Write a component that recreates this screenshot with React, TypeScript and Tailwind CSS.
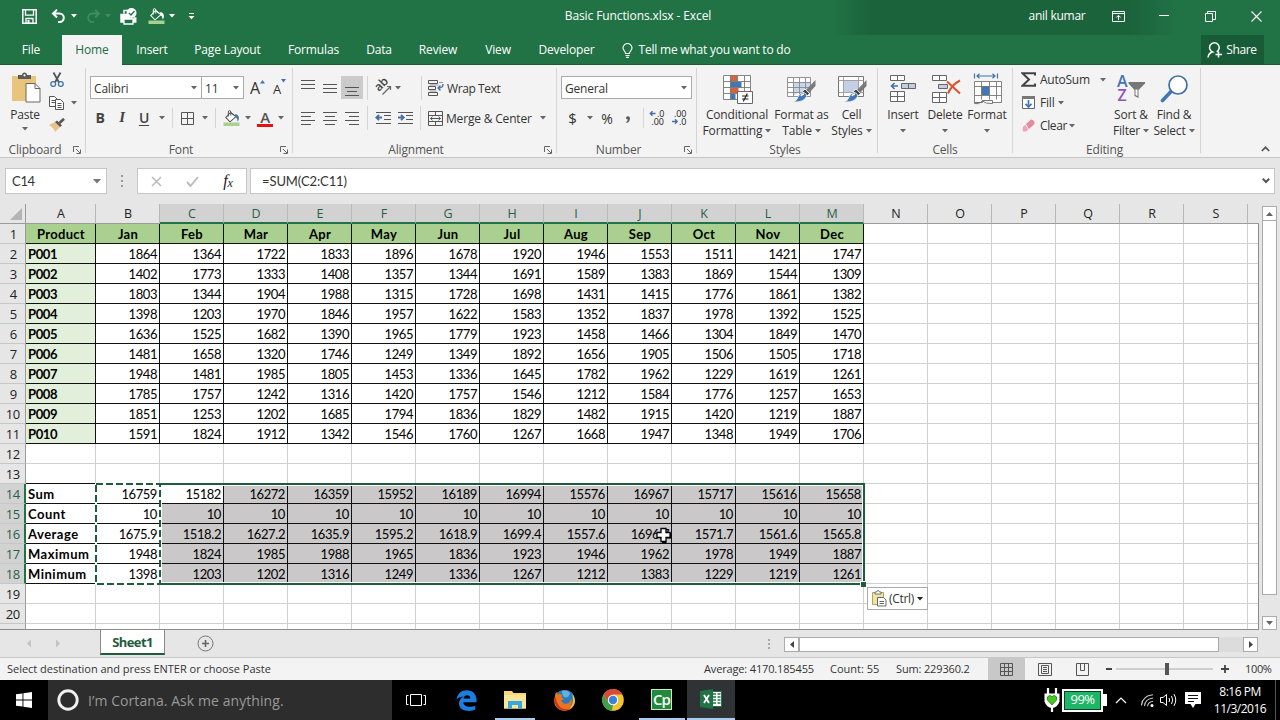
import React from "react";

type CellProps = { className?: string; children?: React.ReactNode };

const COLS = ["A", "B", "C", "D", "E", "F", "G", "H", "I", "J", "K", "L", "M", "N", "O", "P", "Q", "R", "S"];

const DATA: Record<number, string[]> = {
  1: ["Product", "Jan", "Feb", "Mar", "Apr", "May", "Jun", "Jul", "Aug", "Sep", "Oct", "Nov", "Dec"],
  2: ["P001", "1864", "1364", "1722", "1833", "1896", "1678", "1920", "1946", "1553", "1511", "1421", "1747"],
  3: ["P002", "1402", "1773", "1333", "1408", "1357", "1344", "1691", "1589", "1383", "1869", "1544", "1309"],
  4: ["P003", "1803", "1344", "1904", "1988", "1315", "1728", "1698", "1431", "1415", "1776", "1861", "1382"],
  5: ["P004", "1398", "1203", "1970", "1846", "1957", "1622", "1583", "1352", "1837", "1978", "1392", "1525"],
  6: ["P005", "1636", "1525", "1682", "1390", "1965", "1779", "1923", "1458", "1466", "1304", "1849", "1470"],
  7: ["P006", "1481", "1658", "1320", "1746", "1249", "1349", "1892", "1656", "1905", "1506", "1505", "1718"],
  8: ["P007", "1948", "1481", "1985", "1805", "1453", "1336", "1645", "1782", "1962", "1229", "1619", "1261"],
  9: ["P008", "1785", "1757", "1242", "1316", "1420", "1757", "1546", "1212", "1584", "1776", "1257", "1653"],
  10: ["P009", "1851", "1253", "1202", "1685", "1794", "1836", "1829", "1482", "1915", "1420", "1219", "1887"],
  11: ["P010", "1591", "1824", "1912", "1342", "1546", "1760", "1267", "1668", "1947", "1348", "1949", "1706"],
  14: ["Sum", "16759", "15182", "16272", "16359", "15952", "16189", "16994", "15576", "16967", "15717", "15616", "15658"],
  15: ["Count", "10", "10", "10", "10", "10", "10", "10", "10", "10", "10", "10", "10"],
  16: ["Average", "1675.9", "1518.2", "1627.2", "1635.9", "1595.2", "1618.9", "1699.4", "1557.6", "1696.7", "1571.7", "1561.6", "1565.8"],
  17: ["Maximum", "1948", "1824", "1985", "1988", "1965", "1836", "1923", "1946", "1962", "1978", "1949", "1887"],
  18: ["Minimum", "1398", "1203", "1202", "1316", "1249", "1336", "1267", "1212", "1383", "1229", "1219", "1261"],
};

function Box({ className = "", children }: CellProps) {
  return <div className={`flex shrink-0 items-center justify-center ${className}`}>{children}</div>;
}

function Arrow({ className = "text-[#666]" }: { className?: string }) {
  return (
    <svg width="6" height="4" viewBox="0 0 6 4" className={`shrink-0 ${className}`}>
      <path d="M0 0h6L3 3.500z" fill="currentColor" />
    </svg>
  );
}

function Sep({ className = "" }: { className?: string }) {
  return <div className={`w-px shrink-0 bg-[#d4d4d4] ${className}`} />;
}

function Launcher() {
  return (
    <svg width="8" height="8" viewBox="0 0 8 8" className="mt-px shrink-0">
      <path d="M.5 6V.5H6M3 3l4 4M7.500 3.500v4h-4" fill="none" stroke="#666" />
    </svg>
  );
}

function Group({ name, className, launcher, pad = "", children }: { name: string; className: string; launcher?: boolean; pad?: string; children: React.ReactNode }) {
  return (
    <div className={`flex shrink-0 ${className}`}>
      <div className="flex min-w-0 flex-1 flex-col">
        <div className="flex h-[76px] flex-col">{children}</div>
        <div className="flex h-4 items-center pr-1">
          <span className={`flex-1 pt-px text-center text-[#555] ${pad}`}>{name}</span>
          {launcher && <Launcher />}
        </div>
      </div>
      <Sep className="mt-[3px] h-[85px]" />
    </div>
  );
}

function Bucket({ light }: { light?: boolean }) {
  const line = light ? "#fff" : "#555";
  return (
    <svg width="17" height="16" viewBox="0 0 17 16">
      <path d="M7.500 2.500L2.800 7.600l4.200 4.200 6-5.200z" fill={light ? "none" : "#fff"} stroke={line} strokeWidth="1.100" />
      <path d="M5.300 6.500V2q0-1.400 1.200-1.400T7.800 2v3.500M7.500 2.500l5.600 4.200" fill="none" stroke={line} strokeWidth="1" />
      <path d="M12.300 4q3.800.8 3.600 4.400-.1 1.800-1.200 3-.2-3.300-2.700-4.600z" fill={light ? "#fff" : "#4675a8"} />
      <path d="M.5 12.500h16V16H.5z" fill="#a9d08e" />
    </svg>
  );
}

function Lines({ rows }: { rows: number[][] }) {
  return (
    <svg width="16" height="16" viewBox="0 0 16 16">
      {rows.map(([x1, x2, y], i) => (
        <path key={i} d={`M${x1} ${y}.5H${x2}`} stroke="#555" />
      ))}
    </svg>
  );
}

function TitleBar() {
  return (
    <div className="flex h-[35px] items-center bg-[linear-gradient(90deg,transparent_0,transparent_830px,#1b643b_870px,#1b633b_1130px,transparent_1180px)] pb-[3px] text-white">
      <Box className="ml-[21px] w-4">
        <svg width="15" height="15" viewBox="0 0 15 15">
          <path d="M.8.8h13.400v13.400H.8z" fill="none" stroke="#fff" strokeWidth="1.500" />
          <path d="M3.500 1v5.200h8V1M4 14v-4.500h7V14" fill="none" stroke="#fff" strokeWidth="1.300" />
          <path d="M5.500 11h2v3h-2z" fill="#fff" />
        </svg>
      </Box>
      <Box className="ml-[13px] w-4">
        <svg width="15" height="14" viewBox="0 0 15 14">
          <path d="M2 4.500h6.500a4.300 4.300 0 0 1 0 8.600H7M6 .8L2 4.500l4 4" fill="none" stroke="#fff" strokeWidth="2" />
        </svg>
      </Box>
      <Box className="ml-[3px] w-2.5"><Arrow className="text-white" /></Box>
      <Box className="ml-[6px] w-4">
        <svg width="15" height="14" viewBox="0 0 15 14">
          <path d="M13 4.500H6.500a4.300 4.300 0 0 0 0 8.600H8M9 .8l4 3.700-4 4" fill="none" stroke="#408b60" strokeWidth="1.800" />
        </svg>
      </Box>
      <Box className="ml-0.5 w-2.5"><Arrow className="text-[#408b60]" /></Box>
      <Box className="ml-[7px] w-[17px]">
        <svg width="17" height="17" viewBox="0 0 17 17">
          <path d="M4 5.500V2.500h4M13.500 10h2.200v4h-2.500M4 14H1V6.500h6" fill="none" stroke="#fff" strokeWidth="1.500" />
          <path d="M1 7h7l3 3.500H16V14H1z" fill="#fff" />
          <path d="M4 11h9v5H4z" fill="#217346" stroke="#fff" strokeWidth="1.300" />
          <circle cx="11.500" cy="5" r="5" fill="#fff" />
          <path d="M9 5l2 2 3.500-4" fill="none" stroke="#217346" strokeWidth="1.300" />
        </svg>
      </Box>
      <Box className="ml-[11px] w-[17px]"><Bucket light /></Box>
      <Box className="ml-[2px] w-2.5"><Arrow className="text-white" /></Box>
      <Box className="ml-[9px] w-2.5">
        <svg width="7" height="8" viewBox="0 0 7 8"><path d="M1 1.500h5" stroke="#fff" /><path d="M.5 4h6l-3 3.300z" fill="#fff" /></svg>
      </Box>
      <div className="ml-[368px] w-[148px] whitespace-nowrap text-center tracking-[-0.1px]">Basic Functions.xlsx - Excel</div>
      <div className="ml-[316px] w-[58px] whitespace-nowrap text-center tracking-[-0.25px]">anil kumar</div>
      <Box className="ml-[24px] w-4">
        <svg width="13" height="11" viewBox="0 0 13 11"><path d="M.5.5h12v10H.5zM.5 2.500h12M6.500 9V4.500M4.300 6.500l2.200-2.200 2.200 2.200" fill="none" stroke="#fff" /></svg>
      </Box>
      <Box className="ml-[30px] w-4"><svg width="10" height="2"><path d="M0 .5h10" stroke="#fff" /></svg></Box>
      <Box className="ml-[30px] w-4">
        <svg width="11" height="11" viewBox="0 0 11 11"><path d="M.5 2.500h7v8h-7zM2.500 2.500v-2h8v8h-3" fill="none" stroke="#fff" /></svg>
      </Box>
      <Box className="ml-[30px] w-4">
        <svg width="11" height="11" viewBox="0 0 11 11"><path d="M.5.5l10 10M10.500.5l-10 10" fill="none" stroke="#fff" strokeWidth="1.100" /></svg>
      </Box>
    </div>
  );
}

function TabBar() {
  return (
    <div className="flex h-[30px] items-end tracking-[-0.15px] text-white shadow-[inset_0_-1px_0_#1a5c38]">
      <Box className="h-[30px] w-[62px]">File</Box>
      <Box className="h-[30px] w-[60px] bg-[#f3f3f3] text-[#1f6b42]">Home</Box>
      <Box className="h-[30px] w-[60px]">Insert</Box>
      <Box className="h-[30px] w-[91px]">Page Layout</Box>
      <Box className="h-[30px] w-[81px]">Formulas</Box>
      <Box className="h-[30px] w-[50px]">Data</Box>
      <Box className="h-[30px] w-[68px]">Review</Box>
      <Box className="h-[30px] w-[52px]">View</Box>
      <Box className="h-[30px] w-[85px]">Developer</Box>
      <Box className="ml-3 h-[30px] w-3">
        <svg width="11" height="15" viewBox="0 0 11 15"><path d="M3.500 10.500Q3.400 8.800 2 7.400A4.300 4.300 0 1 1 9 7.400Q7.600 8.800 7.500 10.500zM3.500 12.500h4M4 14.400h3" fill="none" stroke="#fff" strokeWidth="1.100" /></svg>
      </Box>
      <Box className="ml-1.5 h-[30px] w-[151px] whitespace-nowrap tracking-[-0.22px]">Tell me what you want to do</Box>
      <Box className="ml-auto mr-4 h-[30px] w-[63px] gap-[3px] bg-[#185c37] pr-px">
        <svg width="16" height="17" viewBox="0 0 16 17"><path d="M1 15.500q.5-4.500 4.500-5.500a4.800 4.800 0 1 1 4.200-.2M11.500 9.500v6M8.500 12.500h6.500" fill="none" stroke="#fff" strokeWidth="1.500" /></svg>
        <span className="tracking-[-0.4px]">Share</span>
      </Box>
    </div>
  );
}

function BigButton({ className, icon, lines }: { className: string; icon: React.ReactNode; lines: string[] }) {
  return (
    <div className={`flex shrink-0 flex-col items-center whitespace-nowrap ${className}`}>
      <div className="mt-1.5 flex h-[35px] items-center justify-center">{icon}</div>
      <div className="h-4 leading-[18px]">{lines[0]}</div>
      <div className="flex h-4 items-center gap-[3px] pt-px leading-4">
        {lines[1] && <span>{lines[1]}</span>}
        <Arrow />
      </div>
    </div>
  );
}

function BrushHead() {
  return (
    <>
      <path d="M28.500 6v6l-6.500 7-3-3z" fill="#7a7a7a" />
      <path d="M18 15l4.500 4.500-2.500 2.500-4.500-4.500z" fill="#444" stroke="#fff" strokeWidth=".8" />
      <path d="M6 28q4-1 5-5 1.500-4 5-4.500 4 .5 3.500 4Q17 28.500 6 28z" fill="#3f78b5" stroke="#f3f3f3" strokeWidth=".8" />
      <path d="M14 22q1-2 3-2" stroke="#fff" strokeWidth="1.500" fill="none" />
    </>
  );
}

function Ribbon() {
  return (
    <div className="flex h-[93px] border-b border-[#c6c6c6] bg-[#f3f3f3] tracking-[-0.18px] text-[#333]">
      <Group name="Clipboard" className="w-[86px]" launcher pad="pr-[3px]">
        <div className="flex">
          <div className="ml-[6px] flex w-[38px] flex-col items-center">
            <svg className="ml-[2px] mt-[7px]" width="30" height="32" viewBox="0 0 30 32">
              <path d="M1 4h24v25H1z" fill="#e8c57b" />
              <path d="M7 7V3h4q0-2.500 2.500-2.500T16 3h4v4z" fill="#5a5a5a" />
              <circle cx="13.500" cy="3.300" r="1.100" fill="#fff" />
              <path d="M15 11.500h9l5 5V30H15z" fill="#fff" stroke="#666" />
              <path d="M24 11.500v5h5" fill="none" stroke="#666" />
            </svg>
            <div className="mt-[3px] h-4 leading-4">Paste</div>
            <div className="mt-[4px]"><Arrow /></div>
          </div>
          <div className="ml-[4px] flex flex-col pt-[3px]">
            <Box className="h-[23px] w-[18px]">
              <svg width="14" height="16" viewBox="0 0 14 16">
                <path d="M3.500.5L9 10.500M10.500.5L5 10.500" stroke="#555" strokeWidth="1.800" />
                <circle cx="3.200" cy="12" r="2.400" fill="none" stroke="#4472a8" strokeWidth="1.300" />
                <circle cx="10.800" cy="12" r="2.400" fill="none" stroke="#4472a8" strokeWidth="1.300" />
              </svg>
            </Box>
            <div className="flex h-[23px] items-center">
              <Box className="w-[18px]">
                <svg width="16" height="14" viewBox="0 0 16 14">
                  <path d="M.5.5h5l3 3v7h-8zM2.500 4.500h4M2.500 6.500h4" fill="#fff" stroke="#555" />
                  <path d="M6.500 3.500h5l3 3v7h-8zM8.500 7.500h4M8.500 9.500h4M8.500 11.500h4" fill="#fff" stroke="#555" />
                </svg>
              </Box>
              <Box className="ml-[3px] w-2.5"><Arrow /></Box>
            </div>
            <Box className="h-[22px] w-[18px]">
              <svg width="16" height="14" viewBox="0 0 16 14">
                <path d="M0 7l6-3 5 5-5 5Q5 10 0 7z" fill="#e8c08a" />
                <path d="M6 4l2-1.500 5 5L11 9z" fill="#555" />
                <path d="M10.500 5L15 .8" stroke="#555" strokeWidth="2.600" />
              </svg>
            </Box>
          </div>
        </div>
      </Group>

      <Group name="Font" className="w-[207px]" launcher pad="pr-[4px]">
        <div className="mt-[11px] flex h-[23px] items-center pl-1">
          <div className="flex h-[23px] w-[112px] items-center justify-between border border-[#ababab] bg-white pl-[3px] pr-[4px]">
            <span className="pt-[2px]">Calibri</span><Arrow />
          </div>
          <div className="-ml-px flex h-[23px] w-[43px] items-center justify-between border border-[#ababab] bg-white pl-[3px] pr-[4px]">
            <span className="pt-[2px]">11</span><Arrow />
          </div>
          <div className="ml-[6px] flex w-[14px] items-start text-[16px] leading-4"><span>A</span>
            <svg width="5" height="4" className="shrink-0"><path d="M0 3.500h5L2.500 0z" fill="#4472a8" /></svg>
          </div>
          <div className="ml-[9px] flex w-[14px] items-start text-[13px] leading-4"><span className="pt-0.5">A</span>
            <svg width="5" height="4" className="shrink-0"><path d="M0 0h5L2.500 3.500z" fill="#4472a8" /></svg>
          </div>
        </div>
        <div className="mt-[8px] flex h-[22px] items-center text-sm">
          <Box className="w-7 font-bold text-[#444]">B</Box>
          <Box className="w-4 font-['Liberation_Serif'] text-[15px] font-bold italic text-[#444]">I</Box>
          <Box className="w-7 font-semibold text-[#444] underline underline-offset-2">U</Box>
          <Box className="w-2"><Arrow /></Box>
          <Sep className="ml-1.5 h-5" />
          <Box className="ml-[7px] w-[15px]">
            <svg width="13" height="13" viewBox="0 0 13 13"><path d="M.5.5h12v12H.5zM6.500.5v12M.5 6.500h12" fill="none" stroke="#555" /></svg>
          </Box>
          <Box className="ml-1 w-3"><Arrow /></Box>
          <Sep className="ml-1 h-5" />
          <Box className="ml-[7px] w-[17px]"><Bucket /></Box>
          <Box className="ml-[2px] w-3"><Arrow /></Box>
          <Box className="ml-[3px] w-4">
            <div className="flex flex-col items-center pt-px">
              <span className="h-[12px] text-[15px] font-semibold leading-[12px] text-[#555]">A</span>
              <div className="mt-px h-[3px] w-4 bg-[#e81010]" />
            </div>
          </Box>
          <Box className="ml-[2px] w-3"><Arrow /></Box>
        </div>
      </Group>

      <Group name="Alignment" className="w-[264px]" launcher pad="pr-[5px]">
        <div className="mt-[11px] flex h-[23px] items-center">
          <Box className="ml-[7px] w-4 pb-[3px]"><Lines rows={[[1, 15, 2], [1, 15, 6], [1, 15, 10]]} /></Box>
          <Box className="ml-[6px] w-4"><Lines rows={[[1, 15, 4], [1, 15, 8], [1, 15, 12]]} /></Box>
          <Box className="ml-[3px] h-[23px] w-[22px] bg-[#cbcbcb] pt-[4px]"><Lines rows={[[1, 15, 5], [3, 13, 9], [1, 15, 13]]} /></Box>
          <Sep className="ml-1 h-6" />
          <Box className="ml-[7px] w-[17px]">
            <svg width="18" height="17" viewBox="0 0 18 17" className="overflow-visible">
              <text x="0" y="0" transform="translate(4 13) rotate(-45)" fontSize="12" fontWeight="600" fontFamily="Open Sans" fill="#444">ab</text>
              <path d="M7.500 15.500L15.500 7.500M12 7.500h3.500V11" fill="none" stroke="#666" strokeWidth="1.200" />
            </svg>
          </Box>
          <Box className="ml-px w-2.5"><Arrow /></Box>
          <Sep className="ml-[18px] h-6" />
          <Box className="ml-[6px] w-4">
            <svg width="16" height="16" viewBox="0 0 16 16">
              <path d="M.5.5h9v3h-9zM.5 6.500h7v3h-7zM.5 12.500h9v3h-9z" fill="none" stroke="#555" />
              <path d="M11 2.500h4M1.500 5h9M1.500 11h7" stroke="#999" />
              <path d="M15 4q.5 4-5 4M12.500 5.500L10 8l2.500 2.500" fill="none" stroke="#4472a8" strokeWidth="1.400" />
            </svg>
          </Box>
          <span className="ml-[3px] whitespace-nowrap pt-[2px] tracking-[-0.4px]">Wrap Text</span>
        </div>
        <div className="mt-[8px] flex h-[22px] items-center">
          <Box className="ml-[7px] w-4"><Lines rows={[[1, 15, 2], [1, 11, 6], [1, 15, 10], [1, 11, 14]]} /></Box>
          <Box className="ml-[6px] w-4"><Lines rows={[[1, 15, 2], [3, 13, 6], [1, 15, 10], [3, 13, 14]]} /></Box>
          <Box className="ml-[6px] w-4"><Lines rows={[[1, 15, 2], [5, 15, 6], [1, 15, 10], [5, 15, 14]]} /></Box>
          <Sep className="ml-[7px] h-6" />
          <Box className="ml-[7px] w-[17px]">
            <svg width="17" height="14" viewBox="0 0 17 14">
              <path d="M1 1.500h15M9 4.500h7M9 8.500h7M1 12.500h15" stroke="#555" />
              <path d="M7 6.500H1.500M4 3.800L1.300 6.500 4 9.200" fill="none" stroke="#4472a8" strokeWidth="1.900" />
            </svg>
          </Box>
          <Box className="ml-[5px] w-[17px]">
            <svg width="17" height="14" viewBox="0 0 17 14">
              <path d="M1 1.500h15M9 4.500h7M9 8.500h7M1 12.500h15" stroke="#555" />
              <path d="M1 6.500h5.500M4 3.800l2.700 2.700L4 9.200" fill="none" stroke="#4472a8" strokeWidth="1.900" />
            </svg>
          </Box>
          <Sep className="ml-[6px] h-6" />
          <Box className="ml-[6px] w-4">
            <svg width="15" height="15" viewBox="0 0 15 15">
              <path d="M.5.5h14v14H.5zM.5 4.500h14M.5 10.500h14M7.500.5v4M7.500 10.500v4M2.500 7.500h10M4.500 5.700l-2 1.800 2 1.800M10.500 5.700l2 1.800-2 1.800" fill="none" stroke="#555" />
            </svg>
          </Box>
          <span className="ml-[3px] w-[86px] whitespace-nowrap pt-[2px]">Merge &amp; Center</span>
          <Box className="ml-[6px] w-2.5"><Arrow /></Box>
        </div>
      </Group>

      <Group name="Number" className="w-[140px]" launcher pad="pr-[4px]">
        <div className="ml-1 mt-[11px] flex h-[23px] w-[131px] items-center justify-between border border-[#ababab] bg-white pl-[3px] pr-[4px]">
          <span className="pt-[2px]">General</span><Arrow />
        </div>
        <div className="mt-[8px] flex h-[22px] items-center">
          <Box className="w-[31px] text-[15px]">$</Box>
          <Arrow className="-ml-px text-[#666]" />
          <Box className="ml-1.5 w-4 text-[14px]">%</Box>
          <Box className="ml-[7px] w-3 pb-3 font-serif text-[24px] font-bold leading-3 text-[#555]">,</Box>
          <Sep className="ml-[9px] h-5" />
          <Box className="ml-[5px] w-4">
            <svg width="16" height="16" viewBox="0 0 16 16" fontSize="9" fontFamily="Open Sans" fill="#222" className="overflow-visible">
              <text x="8" y="7">.0</text><text x="2.500" y="15">.00</text>
              <path d="M6.500 3.500H1.500M3.500 1.300l-2.200 2.200 2.200 2.200" fill="none" stroke="#4472a8" strokeWidth="1.400" />
            </svg>
          </Box>
          <Box className="ml-[6px] w-4">
            <svg width="16" height="16" viewBox="0 0 16 16" fontSize="9" fontFamily="Open Sans" fill="#222" className="overflow-visible">
              <text x="3" y="7">.00</text><text x="8" y="15">.0</text>
              <path d="M1 11.500h5M4 9.300l2.200 2.200-2.200 2.200" fill="none" stroke="#4472a8" strokeWidth="1.400" />
            </svg>
          </Box>
        </div>
      </Group>

      <Group name="Styles" className="w-[181px]">
        <div className="flex">
          <BigButton
            className="ml-1 w-[72px]"
            lines={["Conditional", "Formatting"]}
            icon={
              <svg width="30" height="32" viewBox="0 0 30 32" className="ml-0.5">
                <path d="M.5 2.500h27v24H.5z" fill="#fff" />
                <path d="M7.500 2.500h7v6h-7zM7.500 15h8v5.500h-8z" fill="#d9623b" />
                <path d="M7.500 9h11v5.500h-11zM7.500 21h5v5.500h-5z" fill="#3f78b5" />
                <path d="M.5 2.500h27v24H.5zM.5 8.500h27M.5 14.500h27M.5 20.500h27M7.500 2.500v24M14.500 2.500v6M21.500 2.500v24" fill="none" stroke="#777" strokeWidth=".9" />
                <path d="M14.500 18.500h15v12h-15z" fill="#fff" stroke="#666" />
                <path d="M19 23h6.500M19 26h6.500M24.300 20.500l-4 8" stroke="#222" strokeWidth="1.200" />
              </svg>
            }
          />
          <BigButton
            className="ml-[-2px] w-[61px]"
            lines={["Format as", "Table"]}
            icon={
              <svg width="30" height="30" viewBox="0 0 30 30" className="ml-px">
                <path d="M.5 3.500h23v19H.5z" fill="#fff" />
                <path d="M6 8h18v10H12l-6 4z" fill="#c8d5ea" />
                <path d="M.5 3.500h23v19H.5zM.5 8.500h23M.5 13.500h23M.5 18.500h23M6.500 3.500v19M12.500 3.500v19M18.500 3.500v19" fill="none" stroke="#888" strokeWidth=".9" />
                <BrushHead />
              </svg>
            }
          />
          <BigButton
            className="ml-[-2px] w-[43px]"
            lines={["Cell", "Styles"]}
            icon={
              <svg width="30" height="30" viewBox="0 0 30 30" className="ml-0.5">
                <path d="M.5 2.500h25v20H.5z" fill="#fff" stroke="#777" />
                <path d="M6 7h14v11H6z" fill="#c3cfe6" />
                <path d="M5.500 2.500v20M20.500 2.500v20M.5 6.500h25M.5 18.500h25" stroke="#999" strokeWidth=".9" />
                <BrushHead />
              </svg>
            }
          />
        </div>
      </Group>

      <Group name="Cells" className="w-[135px]" pad="pl-1">
        <div className="flex">
          <BigButton
            className="ml-[4px] w-[42px]"
            lines={["Insert"]}
            icon={
              <svg width="28" height="30" viewBox="0 0 28 30">
                <path d="M1.500 1.500h14v5h-14zM8.500 1.500v5M1.500 17.500h14v10h-14zM8.500 17.500v10M1.500 22.500h14" fill="#fff" stroke="#666" />
                <path d="M12.500 9.500h14v5h-14z" fill="#c3cfe0" stroke="#666" />
                <path d="M19.500 9.500v5" stroke="#666" />
                <path d="M9 12H2.500M5.500 9L2.500 12l3 3" fill="none" stroke="#4472a8" strokeWidth="1.600" />
              </svg>
            }
          />
          <BigButton
            className="w-[42px]"
            lines={["Delete"]}
            icon={
              <svg width="30" height="30" viewBox="0 0 30 30" className="ml-0.5">
                <path d="M1.500 1.500h14v5h-14zM8.500 1.500v5M1.500 18.500h14v10h-14zM8.500 18.500v10M1.500 23.500h14" fill="#fff" stroke="#666" />
                <path d="M7.500 10.500h9v4h-9z" fill="#c3cfe0" stroke="#666" />
                <path d="M16 7.500l13 12M29 6.500q-8 4-12 13" fill="none" stroke="#d9532c" strokeWidth="2" />
              </svg>
            }
          />
          <BigButton
            className="w-[42px]"
            lines={["Format"]}
            icon={
              <svg width="29" height="32" viewBox="0 0 29 32">
                <path d="M1.500.5v5M24.500.5v5M4 3h18M6.500.8L4 3l2.500 2.200M19.500.8L22 3l-2.500 2.200" fill="none" stroke="#4472a8" strokeWidth="1.200" />
                <path d="M1.500 8.500h27v21h-27z" fill="#fff" />
                <path d="M8.500 13h7.500v9H8.500z" fill="#3f78b5" />
                <path d="M1.500 30V8.500h27V29.500H20M1.500 13.500h27M1.500 22.500h27M8.500 8.500v18M16.500 8.500v18M23.500 8.500v18" fill="none" stroke="#777" strokeWidth=".9" />
                <path d="M1.500 30.500q4 1.500 8-2.500 3 3 10 2.500v-3h-10v2H1.500z" fill="#fff" stroke="#666" strokeWidth=".9" />
              </svg>
            }
          />
        </div>
      </Group>

      <Group name="Editing" className="w-[188px]">
        <div className="flex">
          <div className="ml-2 flex w-[87px] flex-col pt-[3px]">
            <div className="flex h-[23px] items-center">
              <svg width="15" height="15" viewBox="0 0 15 15"><path d="M14 3.500V1.200H1.500L8 7.500l-6.500 6.300H14V11.500" fill="none" stroke="#444" strokeWidth="2" /></svg>
              <span className="ml-[4px] w-[60px] pt-px tracking-[-0.25px]">AutoSum</span><Arrow />
            </div>
            <div className="flex h-[23px] items-center">
              <svg width="15" height="15" viewBox="0 0 15 15">
                <path d="M1.500 1.500h12v12h-12z" fill="#fff" stroke="#666" /><path d="M1 1h13v3H1z" fill="#777" />
                <path d="M7.500 5v7M4.500 8.800l3 3.200 3-3.200" fill="none" stroke="#3f78b5" strokeWidth="1.700" />
              </svg>
              <span className="ml-[4px] mr-[3px] pt-px">Fill</span><Arrow />
            </div>
            <div className="flex h-[23px] items-center">
              <svg width="15" height="14" viewBox="0 0 15 14">
                <path d="M5 5l5-4.500q4 .5 3.500 4.500L8 10z" fill="#e58a9b" /><path d="M4.300 5.700L7.300 10.500 5 12.500H1.800V8z" fill="#f0a4b2" />
              </svg>
              <span className="ml-[4px] mr-[2px] pt-px tracking-[-0.4px]">Clear</span><Arrow />
            </div>
          </div>
          <BigButton
            className="w-[46px]"
            lines={["Sort &", "Filter"]}
            icon={
              <svg width="30" height="30" viewBox="0 0 30 30" fontFamily="Open Sans" fontWeight="600" fontSize="16" className="overflow-visible">
                <text x="1" y="13" fill="#4472b0">A</text><text x="1.500" y="27" fill="#9055b5">Z</text>
                <path d="M12.500 8h16.500v1.500L22.500 16v8l-4-2V16l-6-6.500z" fill="#777" /><path d="M19.500 15.500h2v6.500l-2-1z" fill="#fff" />
              </svg>
            }
          />
          <BigButton
            className="ml-[-1px] w-[42px]"
            lines={["Find &", "Select"]}
            icon={
              <svg width="29" height="30" viewBox="0 0 29 30">
                <path d="M11.500 17L2.500 26.500" stroke="#3f78b5" strokeWidth="3.600" strokeLinecap="round" />
                <circle cx="18" cy="11" r="9" fill="#fff" stroke="#3f6fa5" strokeWidth="1.700" />
              </svg>
            }
          />
        </div>
      </Group>
      <div className="flex flex-1 items-end justify-end pb-[5px] pr-2.5">
        <svg width="9" height="6" viewBox="0 0 9 6"><path d="M.8 5l3.700-3.700L8.200 5" fill="none" stroke="#555" strokeWidth="1.700" /></svg>
      </div>
    </div>
  );
}

function FormulaBar() {
  return (
    <div className="flex h-[45px] items-start bg-[#e6e6e6] pt-[10px] font-[Lato,sans-serif] text-[13px] tracking-[-0.15px] text-[#333]">
      <div className="ml-[5px] flex h-[26px] w-[102px] items-center justify-between border border-[#c6c6c6] bg-white pl-[6px] pr-[5px]">
        <span className="pt-[2px] tracking-[-0.3px]">C14</span>
        <svg width="8" height="5"><path d="M0 0h8L4 4.500z" fill="#777" /></svg>
      </div>
      <div className="ml-[14px] flex h-[26px] w-[2px] flex-col items-center justify-center gap-[3px]">
        <i className="size-[2px] bg-[#999]" /><i className="size-[2px] bg-[#999]" /><i className="size-[2px] bg-[#999]" />
      </div>
      <div className="ml-[14px] flex h-[26px] w-[110px] items-center border border-[#c6c6c6] bg-white">
        <Box className="ml-2.5 w-4"><svg width="11" height="11"><path d="M1 1l9 9M10 1l-9 9" stroke="#bbb" strokeWidth="1.500" /></svg></Box>
        <Box className="ml-[20px] w-4"><svg width="13" height="11"><path d="M1 6l3.500 4L12 1" fill="none" stroke="#bbb" strokeWidth="1.900" /></svg></Box>
        <Box className="ml-[20px] w-4 font-['Liberation_Serif'] text-[16px] italic text-[#222]">f<span className="pt-1 text-[12px]">x</span></Box>
      </div>
      <div className="ml-[3px] flex h-[26px] w-[1025px] items-center justify-between border border-[#c6c6c6] bg-white pl-[11px] pr-1">
        <span className="pt-[2px] tracking-[-0.1px]">=SUM(C2:C11)</span>
        <svg width="8" height="6"><path d="M.8.8L4 4l3.200-3.200" fill="none" stroke="#555" strokeWidth="2" /></svg>
      </div>
    </div>
  );
}

function cellClass(r: number, c: number) {
  const hasData = DATA[r] !== undefined && c < 13;
  const parts: string[] = [];
  const blackBottom = c < 13 && (hasData || r === 13);
  parts.push(hasData ? "border-r-[#111]" : "border-r-[#d0d0d0]");
  parts.push(blackBottom ? "border-b-[#111]" : "border-b-[#d0d0d0]");
  if (r === 1 && c < 13) parts.push("justify-center bg-[#a9d08e] pl-[3px] font-bold tracking-[0.3px]");
  else if (c === 0 && r < 12) parts.push("justify-start font-bold tracking-[-0.4px]");
  else if (c === 0) parts.push("justify-start font-bold tracking-[0.5px]");
  else parts.push("justify-end tracking-[-0.42px]");
  if (c === 0 && r > 1 && r < 12) parts.push("bg-[#e2efda]");
  else if (r >= 14 && r <= 18 && c >= 2 && c < 13 && !(r === 14 && c === 2)) parts.push("bg-[#cac8c9]");
  else if (!(r === 1 && c < 13)) parts.push("bg-white");
  return parts.join(" ");
}

function Sheet() {
  const rows = Array.from({ length: 21 }, (_, i) => i + 1);
  return (
    <div className="relative flex h-[427px] overflow-hidden bg-[#e6e6e6]">
      <div className="flex w-[1259px] flex-col">
        <div className="mt-px flex h-[20px] shrink-0 text-[12.500px] text-[#222]">
          <div className="flex w-[26px] shrink-0 items-end justify-end border-b border-r border-[#9b9b9b] pb-[3px] pr-[3px]">
            <svg width="12" height="12"><path d="M12 0v12H0z" fill="#b4b4b4" /></svg>
          </div>
          {COLS.map((l, c) => (
            <div
              key={l}
              className={`flex shrink-0 items-center justify-center border-r border-r-[#b8b8b8] pl-px ${c === 0 ? "w-[70px]" : "w-16"} ${c >= 2 && c < 13 ? "border-b-2 border-b-[#217346] bg-[#d2d2d2] pt-[2px] text-[#2b5f45]" : "border-b border-b-[#9b9b9b] pt-px"}`}
            >
              {l}
            </div>
          ))}
          <div className="flex-1 border-b border-[#9b9b9b]" />
        </div>
        <div className="flex h-[406px] flex-col overflow-hidden border-b border-r border-[#8b8b8b]">
          {rows.map((r) => {
            const sel = r >= 14 && r <= 18;
            return (
              <div key={r} className="flex h-5 shrink-0">
                <div className={`flex w-[26px] shrink-0 items-center justify-end border-b border-b-[#c6c6c6] pt-[2px] text-[13px] tracking-[-0.3px] ${r > 9 ? (sel ? "pr-[4px]" : "pr-[5px]") : "pr-[8px]"} ${sel ? "border-r-2 border-r-[#217346] bg-[#d2d2d2] text-[#2b5f45]" : "border-r border-r-[#9b9b9b] text-[#222]"}`}>
                  {r < 21 ? r : ""}
                </div>
                {COLS.map((l, c) => (
                  <div key={l} className={`flex shrink-0 items-center border-b border-r px-[2px] pt-[3px] font-[Lato,sans-serif] text-[13px] text-black ${c === 0 ? "w-[70px]" : "w-16"} ${cellClass(r, c)}`}>
                    {DATA[r]?.[c] ?? ""}
                  </div>
                ))}
                <div className="flex-1 border-b border-[#d0d0d0] bg-white" />
              </div>
            );
          })}
        </div>
      </div>

      <div className="ml-[3px] flex w-[15px] flex-col">
        <div className="mt-[3px] flex h-[15px] items-center justify-center border border-[#ababab] bg-white">
          <svg width="7" height="4"><path d="M0 4h7L3.500 0z" fill="#666" /></svg>
        </div>
        <div className="h-[374px] border border-t-0 border-[#ababab] bg-white" />
        <div className="mt-[21px] flex h-[14px] items-center justify-center border border-[#ababab] bg-white">
          <svg width="7" height="4"><path d="M0 0h7L3.500 4z" fill="#666" /></svg>
        </div>
      </div>

      <div className="absolute left-[159px] top-[280px] h-[102px] w-[706px] border-2 border-[#1e5c3c] outline-1 -outline-offset-3 outline-white" />
      <svg className="absolute left-[94px] top-[279px]" width="69" height="104" viewBox="0 0 69 104">
        <path d="M2 2h64v100H2z" fill="none" stroke="#fff" strokeWidth="2" />
        <path d="M2 2h64v100H2z" fill="none" stroke="#1e5c3c" strokeWidth="2" strokeDasharray="7 3" />
      </svg>
      <div className="absolute left-[860px] top-[378px] size-[6px] border-l border-t border-white bg-[#1e5c3c]" />
      <div className="absolute left-[867px] top-[384px] flex h-[23px] w-[61px] items-center border border-[#ababab] bg-white pl-[3px] text-[12px] text-[#333]">
        <svg width="16" height="17" viewBox="0 0 16 17">
          <path d="M1.500 2.500h11v12h-11z" fill="#f0e3a8" stroke="#b5a35a" />
          <path d="M4 4V2h1.500q.5-1.500 1.500-1.500T8.500 2H10v2z" fill="#fff" stroke="#666" strokeWidth=".9" />
          <path d="M6.500 7.500h6l2.500 2.500v6H6.500zM8.500 11.500h4.500M8.500 13.500h4.500" fill="#fff" stroke="#666" />
        </svg>
        <span className="ml-[2px] mr-[3px] pt-px tracking-[-0.3px]">(Ctrl)</span><Arrow className="text-[#222]" />
      </div>
      <svg className="absolute left-[656px] top-[324px]" width="16" height="16" viewBox="0 0 16 16">
        <path d="M5 1.500h5v4h4v5h-4v4H5v-4H1v-5h4z" fill="#fff" stroke="#000" strokeWidth="1.300" />
        <path d="M10.500 15.300H6M14.800 6v5h-4.500" fill="none" stroke="#000" strokeWidth="1.200" />
      </svg>
    </div>
  );
}

function SheetTabs() {
  return (
    <div className="flex h-7 items-start border-b border-[#c6c6c6] bg-[#e6e6e6]">
      <svg className="ml-[27px] mt-[9px]" width="34" height="9"><path d="M4 .5v8L0 4.500zM29 .5v8l4-4z" fill="#c3c3c3" /></svg>
      <div className="ml-[39px] flex h-[25px] w-[65px] items-center justify-center border-x border-b-2 border-x-[#8b8b8b] border-b-[#1e5c3c] bg-white pt-[3px] text-[13px] font-bold tracking-[-0.6px] text-[#1e5c3c]">Sheet1</div>
      <svg className="ml-[32px] mt-[5px]" width="17" height="17" viewBox="0 0 17 17"><circle cx="8.500" cy="8.500" r="7.500" fill="none" stroke="#777" /><path d="M8.500 5v7M5 8.500h7" stroke="#666" strokeWidth="1.600" /></svg>
      <div className="ml-[554px] mt-[9px] flex flex-col gap-[2px]">
        <i className="size-[2px] bg-[#aaa]" /><i className="size-[2px] bg-[#aaa]" /><i className="size-[2px] bg-[#aaa]" />
      </div>
      <div className="ml-[14px] mt-[7px] flex h-[15px] w-[474px] bg-[#dcdcdc]">
        <Box className="w-[15px] border border-[#ababab] bg-white"><svg width="4" height="7"><path d="M4 0v7L0 3.500z" fill="#444" /></svg></Box>
        <div className="w-[420px] border border-[#ababab] bg-white" />
        <Box className="ml-auto w-[15px] border border-[#ababab] bg-white"><svg width="4" height="7"><path d="M0 0v7l4-3.500z" fill="#444" /></svg></Box>
      </div>
    </div>
  );
}

function StatusBar() {
  return (
    <div className="flex h-[22px] items-center bg-[#f3f3f3] text-[11px] text-[#333]">
      <span className="ml-[7px] w-[697px] whitespace-nowrap tracking-[-0.02px]">Select destination and press ENTER or choose Paste</span>
      <span className="w-[126px] whitespace-nowrap tracking-[-0.15px]">Average: 4170.185455</span>
      <span className="w-[66px] whitespace-nowrap">Count: 55</span>
      <span className="w-[92px] whitespace-nowrap tracking-[-0.15px]">Sum: 229360.2</span>
      <Box className="h-[22px] w-[37px] bg-[#c8c8c8]"><svg width="13" height="13"><path d="M.5.5h12v12H.5zM.5 4.500h12M.5 8.500h12M4.500.5v12M8.500.5v12" fill="none" stroke="#555" /></svg></Box>
      <Box className="h-[22px] w-[39px]"><svg width="14" height="13"><path d="M.5.5h13v12H.5zM3.500 2.500h7v8h-7zM5 4.500h4M5 6.500h4M5 8.500h4" fill="none" stroke="#555" /></svg></Box>
      <Box className="h-[22px] w-[37px]"><svg width="13" height="13"><path d="M.5.5h12v12H.5zM4.500.5v7h4M8.500.5v7" fill="none" stroke="#555" /></svg></Box>
      <svg className="ml-[5px]" width="124" height="12" viewBox="0 0 124 12">
        <path d="M0 6h6M115 6h8M119 2v8" stroke="#444" strokeWidth="1.800" />
        <path d="M10 6h97" stroke="#aaa" /><path d="M59 0h4v12h-4z" fill="#555" />
      </svg>
      <span className="ml-[15px] tracking-[-0.35px]">100%</span>
    </div>
  );
}

function Taskbar() {
  return (
    <div className="flex h-10 items-center bg-black text-white">
      <Box className="h-10 w-12">
        <svg width="16" height="16" viewBox="0 0 16 16"><path d="M0 2.300L6.500 1.400v6.200H0zM7.400 1.300L16 0v7.600H7.400zM0 8.400h6.500v6.200L0 13.700zM7.400 8.400H16V16l-8.600-1.300z" fill="#fff" /></svg>
      </Box>
      <div className="flex h-10 w-[344px] items-center bg-[#2d2d2d] pl-[9px] text-[14px] text-[#999]">
        <svg width="22" height="22"><circle cx="11" cy="11" r="9.200" fill="none" stroke="#f0f0f0" strokeWidth="2.900" /></svg>
        <span className="ml-[9px] whitespace-nowrap tracking-[0.07px]">I’m Cortana. Ask me anything.</span>
      </div>
      <Box className="h-10 w-12">
        <svg width="20" height="14"><path d="M4.500 1.500h11v11h-11zM2.500 2.500h-2v9h2M17.500 2.500h2v9h-2" fill="none" stroke="#fff" /></svg>
      </Box>
      <Box className="ml-0.5 h-10 w-12">
        <svg width="21" height="21" viewBox="0 0 21 21">
          <path d="M.5 9.500C1.500 3.500 5.500.3 10.800.3c6 0 9.700 4.200 9.700 9.500v2.400H7.300c.2 5 7.700 5.800 12 3.200v4.200C13.500 22.500 3 21 3 13.500c0-3.300 2-5.800 4.600-7C5.600 6.500 2.500 7.200.5 9.500zM7.500 8.600h6.800c.2-4.600-6.300-4.600-6.800 0z" fill="#1c7fe0" fillRule="evenodd" />
        </svg>
      </Box>
      <div className="flex h-10 w-[50px] flex-col items-center">
        <Box className="h-[38px]">
          <svg width="22" height="19" viewBox="0 0 22 19"><path d="M0 1h8l1.500 2H22v15.500H0z" fill="#f6d778" /><path d="M0 5h22v13.500H0z" fill="#fbe599" /><path d="M4 18.500V11h14v7.500h-4V15H8v3.500z" fill="#35a8e0" /></svg>
        </Box>
        <div className="h-[2px] w-10 bg-[#a8cdf0]" />
      </div>
      <Box className="h-10 w-[48px]">
        <svg width="23" height="23" viewBox="0 0 23 23">
          <circle cx="11.500" cy="11.500" r="10.500" fill="#e8701e" />
          <path d="M4 4Q8 .5 13 1q6 1 8 6 1 5-2 9-4 2-8-.5L6 9z" fill="#2d78bd" />
          <path d="M9 2q5-1.500 8 2-1 5-5 4.500-3-1-3-6.500z" fill="#59b4e4" />
          <path d="M2 7Q2 4.500 3.500 3q.5 2 1.500 2.300Q7.500 4.500 9 6l-.3 2.500 2 1q0 1.800-2.700 1.800 1 4 5.500 3.500 4-.8 4.500-5Q20 13 17 17q-5 4-11 0Q2 13 2 7z" fill="#e8761e" />
          <path d="M1.200 9Q.7 15.500 6 20q5.500 3.500 11 0-8 1.500-11.500-4Q3 12.500 3 9z" fill="#c9331f" />
          <path d="M19.500 5q4.500 6 1 11.500-1.500 2.500-4 3.500 3.500-5 3.500-9z" fill="#f9bd36" />
        </svg>
      </Box>
      <Box className="h-10 w-[50px]">
        <svg width="22" height="22" viewBox="0 0 22 22">
          <circle cx="11" cy="11" r="10.800" fill="#f2c530" />
          <path d="M1.600 5.600A10.800 10.800 0 0 1 20.400 5.600H11L6.300 13.700z" fill="#d84a3a" />
          <path d="M1.600 5.600l4.700 8.100 4.700 2.600-1.300 5.500A10.800 10.800 0 0 1 1.600 5.600z" fill="#3f9f4c" />
          <circle cx="11" cy="11" r="5.200" fill="#fff" /><circle cx="11" cy="11" r="4.200" fill="#3d80dd" />
        </svg>
      </Box>
      <div className="flex h-10 w-[47px] flex-col items-center">
        <Box className="h-[38px]">
          <div className="flex size-[21px] items-center justify-center border border-[#cfe8d0] bg-[#1f8a3a] text-[15px] font-semibold leading-none tracking-[-1px]">Cp</div>
        </Box>
        <div className="h-[2px] w-[46px] bg-[#a8cdf0]" />
      </div>
      <div className="ml-[2px] flex h-10 w-12 flex-col items-center bg-[#2f3336]">
        <Box className="h-[38px]">
          <svg width="22" height="20" viewBox="0 0 22 20">
            <path d="M11 2.500h10.500v15H11z" fill="#fff" stroke="#217346" />
            <path d="M13 5h3M17.500 5h3M13 8h3M17.500 8h3M13 11h3M17.500 11h3M13 14h3M17.500 14h3" stroke="#217346" strokeWidth="1.600" />
            <path d="M0 2l13-2v20L0 18z" fill="#217346" />
            <path d="M4 6l5 8M9 6l-5 8" stroke="#fff" strokeWidth="1.800" />
          </svg>
        </Box>
        <div className="h-[2px] w-12 bg-[#a8cdf0]" />
      </div>
      <svg className="ml-[309px]" width="17" height="24" viewBox="0 0 17 24">
        <path d="M4 0v6M12 0v6M8 18v6" stroke="#fff" strokeWidth="2.200" />
        <path d="M.5 5.500h15v8q-2 6-7.500 6.500Q2.500 19.500.5 13.500z" fill="#fff" />
        <path d="M8 17l-4.500-5Q2.500 8 5.500 7.500 7.500 7.500 8 9q.5-1.500 2.500-1.500 3 .5 2 4.500z" fill="#46c81e" stroke="#2a7d18" strokeWidth=".8" />
      </svg>
      <div className="ml-[1px] flex h-[23px] w-[41px] items-center justify-center border-2 border-white bg-[#1db566] text-[13px] tracking-[-0.6px] outline-1 -outline-offset-3 outline-[#0b3d22]">99%</div>
      <div className="h-3 w-[4px] bg-white" />
      <svg className="ml-[8px]" width="12" height="8"><path d="M1 7l5-5 5 5" fill="none" stroke="#fff" strokeWidth="1.200" /></svg>
      <svg className="ml-[14px]" width="13" height="13" viewBox="0 0 13 13">
        <path d="M.5 11.500Q1 2 12 .8M3.500 12Q4 5 12 4M6.500 12.300Q7 8 12 7.200" fill="none" stroke="#ccc" strokeWidth="1.100" /><circle cx="11" cy="11.500" r="1.500" fill="#fff" />
      </svg>
      <svg className="ml-[6px]" width="17" height="14" viewBox="0 0 17 14">
        <path d="M.5 4.500h2.500L6.500 1.500v11L3 9.500H.5zM9 5q1.300 2 0 4M11.500 3q2.500 4 0 8M14 1.200q3.500 5.800 0 11.600" fill="none" stroke="#fff" />
      </svg>
      <svg className="ml-[8px]" width="16" height="16" viewBox="0 0 16 16"><path d="M0 0h16v12h-5.500L8 16l-2.500-4H0z" fill="#fff" /><path d="M3 3.500h10M3 6.500h10M3 9.500h6" stroke="#111" /></svg>
      <div className="ml-auto mr-[8px] flex w-[54px] flex-col items-center pb-px text-[12px] leading-[17px] tracking-[-0.5px]">
        <span className="whitespace-nowrap">8:16 PM</span><span className="whitespace-nowrap">11/3/2016</span>
      </div>
      <div className="mr-[4px] h-10 w-px bg-[#555]" />
    </div>
  );
}

export default function App() {
  return (
    <div className="flex h-[720px] w-[1280px] flex-col overflow-hidden bg-[#e6e6e6] font-['Open_Sans',sans-serif] text-[12px] leading-normal">
      <div className="h-[65px] shrink-0 bg-[#217346]">
        <TitleBar />
        <TabBar />
      </div>
      <Ribbon />
      <FormulaBar />
      <Sheet />
      <SheetTabs />
      <StatusBar />
      <Taskbar />
    </div>
  );
}
